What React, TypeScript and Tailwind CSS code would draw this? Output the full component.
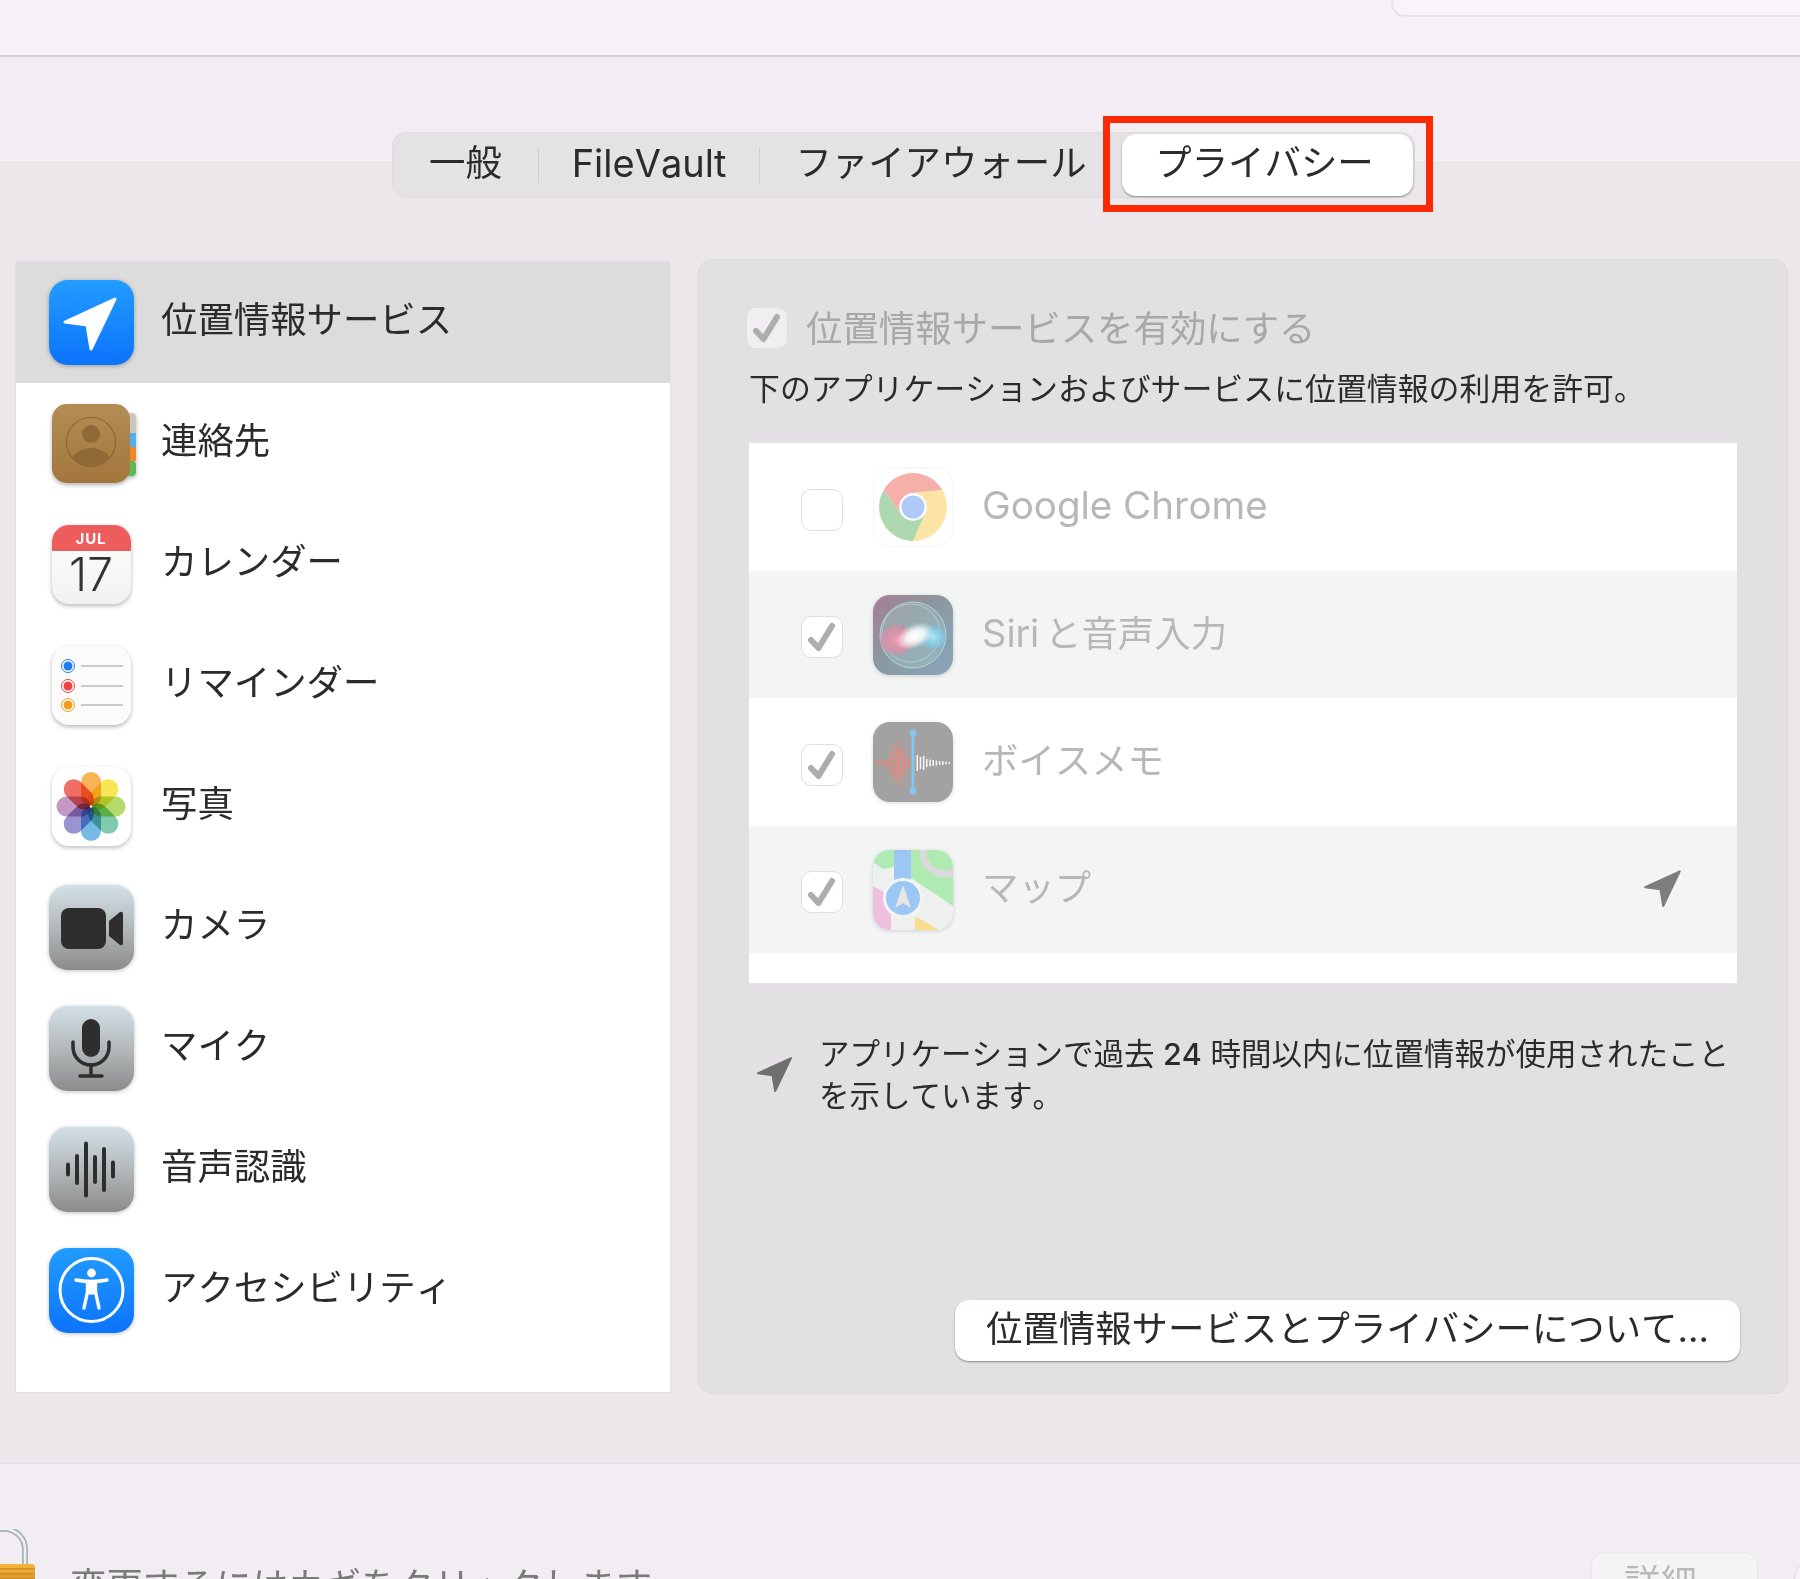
import React from 'react';

const ARROW = 'M66 19 L16 42 L38 45 L42 69 Z';

function LocationArrow({ className }: { className?: string }) {
  return (
    <svg viewBox="13 17 56 55" className={className}>
      <path d={ARROW} fill="currentColor" stroke="currentColor" strokeWidth="3" strokeLinejoin="round" />
    </svg>
  );
}

function GrayDefs({ id }: { id: string }) {
  return (
    <defs>
      <linearGradient id={id} x1="0" y1="0" x2="0" y2="1">
        <stop offset="0" stopColor="#d3e0e6" />
        <stop offset="0.5" stopColor="#b3b9bb" />
        <stop offset="1" stopColor="#8c8b8b" />
      </linearGradient>
    </defs>
  );
}

function BlueDefs({ id }: { id: string }) {
  return (
    <defs>
      <linearGradient id={id} x1="0" y1="0" x2="0" y2="1">
        <stop offset="0" stopColor="#229cff" />
        <stop offset="1" stopColor="#0c73fb" />
      </linearGradient>
    </defs>
  );
}

function LocationIcon() {
  return (
    <svg viewBox="0 0 85 85" className="h-[85px] w-[85px] drop-shadow-[0_1px_2px_rgba(0,0,0,0.3)]">
      <BlueDefs id="loc" />
      <rect width="85" height="85" rx="19" fill="url(#loc)" />
      <path d={ARROW} fill="#fff" stroke="#fff" strokeWidth="3" strokeLinejoin="round" />
    </svg>
  );
}

function ContactsIcon() {
  return (
    <svg viewBox="0 0 85 85" className="h-[85px] w-[85px] overflow-visible drop-shadow-[0_2px_2px_rgba(0,0,0,0.3)]">
      <defs>
        <linearGradient id="brown" x1="0" y1="0" x2="0" y2="1">
          <stop offset="0" stopColor="#b38d55" />
          <stop offset="1" stopColor="#a3763c" />
        </linearGradient>
        <clipPath id="headClip">
          <circle cx="42" cy="41" r="24" />
        </clipPath>
      </defs>
      <rect x="70" y="12" width="17" height="22" rx="4" fill="#c9c6bb" />
      <rect x="74" y="32" width="13" height="14" fill="#4fb2ee" />
      <rect x="74" y="46" width="13" height="14" fill="#ef8a22" />
      <rect x="70" y="60" width="17" height="15" rx="4" fill="#5cb85a" />
      <rect x="3" y="3" width="78" height="79" rx="15" fill="url(#brown)" />
      <circle cx="42" cy="41" r="24.5" fill="none" stroke="#8c6632" strokeWidth="1.2" />
      <g clipPath="url(#headClip)" fill="#8f6a36">
        <circle cx="42" cy="33" r="9" />
        <ellipse cx="42" cy="62" rx="20" ry="15" />
      </g>
    </svg>
  );
}

function CalendarIcon() {
  return (
    <svg viewBox="0 0 85 85" className="h-[85px] w-[85px] drop-shadow-[0_2px_2px_rgba(0,0,0,0.28)]">
      <defs>
        <linearGradient id="calBody" x1="0" y1="0" x2="0" y2="1">
          <stop offset="0" stopColor="#ffffff" />
          <stop offset="1" stopColor="#f1f1ef" />
        </linearGradient>
        <clipPath id="calClip">
          <rect x="3" y="3" width="79" height="79" rx="17" />
        </clipPath>
      </defs>
      <rect x="3" y="3" width="79" height="79" rx="17" fill="url(#calBody)" />
      <rect x="3" y="3" width="79" height="26" fill="#ee5d5e" clipPath="url(#calClip)" />
      <text x="42" y="22" textAnchor="middle" fontSize="15" fontWeight="700" fill="#fff" letterSpacing="1">JUL</text>
      <text x="42" y="69" textAnchor="middle" fontSize="46" fontWeight="300" fill="#333">17</text>
    </svg>
  );
}

function RemindersIcon() {
  const dots = [
    { y: 23, c: '#1e7cf2' },
    { y: 43, c: '#ee4444' },
    { y: 62, c: '#f39a1c' },
  ];
  return (
    <svg viewBox="0 0 85 85" className="h-[85px] w-[85px] drop-shadow-[0_2px_2px_rgba(0,0,0,0.28)]">
      <rect x="3" y="3" width="79" height="79" rx="17" fill="#fbfbfa" />
      {dots.map((d) => (
        <g key={d.y}>
          <circle cx="19" cy={d.y} r="6.5" fill="#fff" stroke={d.c} strokeWidth="1" />
          <circle cx="19" cy={d.y} r="4.5" fill={d.c} />
          <rect x="32" y={d.y - 1} width="42" height="2" fill="#cbcbcb" />
        </g>
      ))}
    </svg>
  );
}

function PhotosIcon() {
  const petals = ['#f7a02a', '#f6e02a', '#a4d044', '#62bd98', '#55a8de', '#7f78c4', '#b47fb6', '#ec4a40'];
  return (
    <svg viewBox="0 0 85 85" className="h-[85px] w-[85px] drop-shadow-[0_2px_2px_rgba(0,0,0,0.25)]">
      <rect x="3" y="3" width="79" height="79" rx="17" fill="#fff" />
      {petals.map((c, i) => (
        <rect
          key={c}
          x="32"
          y="8"
          width="20"
          height="34.5"
          rx="10"
          fill={c}
          fillOpacity="0.8"
          transform={`rotate(${i * 45} 42 42.5)`}
          style={{ mixBlendMode: 'multiply' }}
        />
      ))}
      <circle cx="42" cy="42.5" r="1.2" fill="#fff" />
    </svg>
  );
}

function CameraIcon() {
  return (
    <svg viewBox="0 0 85 85" className="h-[85px] w-[85px] drop-shadow-[0_1px_2px_rgba(0,0,0,0.25)]">
      <GrayDefs id="cam" />
      <rect width="85" height="85" rx="19" fill="url(#cam)" />
      <rect x="12" y="23" width="45" height="41" rx="8" fill="#2e2e2e" />
      <path d="M60 36 L71 27 Q74 26 74 29 L74 58 Q74 61 71 60 L60 51 Z" fill="#2e2e2e" />
    </svg>
  );
}

function MicIcon() {
  return (
    <svg viewBox="0 0 85 85" className="h-[85px] w-[85px] drop-shadow-[0_1px_2px_rgba(0,0,0,0.25)]">
      <GrayDefs id="mic" />
      <rect width="85" height="85" rx="19" fill="url(#mic)" />
      <rect x="33" y="13" width="18" height="38" rx="9" fill="#2e2e2e" />
      <path d="M24 36 V41 A18 18 0 0 0 60 41 V36" fill="none" stroke="#2e2e2e" strokeWidth="3.5" strokeLinecap="round" />
      <path d="M42 59 V69 M31 70 H53" fill="none" stroke="#2e2e2e" strokeWidth="3.5" strokeLinecap="round" />
    </svg>
  );
}

function SpeechIcon() {
  const bars = [
    { x: 19, h: 10 },
    { x: 28, h: 27 },
    { x: 37, h: 52 },
    { x: 46, h: 25 },
    { x: 55, h: 41 },
    { x: 64, h: 14 },
  ];
  return (
    <svg viewBox="0 0 85 85" className="h-[85px] w-[85px] drop-shadow-[0_1px_2px_rgba(0,0,0,0.25)]">
      <GrayDefs id="speech" />
      <rect width="85" height="85" rx="19" fill="url(#speech)" />
      {bars.map((b) => (
        <line key={b.x} x1={b.x} x2={b.x} y1={42.5 - b.h / 2} y2={42.5 + b.h / 2} stroke="#2e2e2e" strokeWidth="4" strokeLinecap="round" />
      ))}
    </svg>
  );
}

function AccessibilityIcon() {
  return (
    <svg viewBox="0 0 85 85" className="h-[85px] w-[85px] drop-shadow-[0_1px_2px_rgba(0,0,0,0.25)]">
      <BlueDefs id="acc" />
      <rect width="85" height="85" rx="19" fill="url(#acc)" />
      <circle cx="42.5" cy="42" r="31.5" fill="none" stroke="#fff" strokeWidth="3" />
      <circle cx="42.5" cy="25" r="4.4" fill="#fff" />
      <path d="M27 32 Q42.5 35 58 32" fill="none" stroke="#fff" strokeWidth="3.4" strokeLinecap="round" />
      <path d="M38.5 34 V44 L35 60 M46.5 34 V44 L50 60 M39 44 Q42.5 46 46 44" fill="none" stroke="#fff" strokeWidth="3.4" strokeLinecap="round" strokeLinejoin="round" />
      <rect x="38.5" y="33" width="8" height="12" fill="#fff" />
    </svg>
  );
}

function ChromeIcon() {
  return (
    <svg viewBox="0 0 80 80" className="h-[80px] w-[80px]">
      <rect x="0.5" y="0.5" width="79" height="79" rx="17" fill="#fff" stroke="#f5f5f5" />
      <g opacity="0.42">
        <path d="M69.4 23 A34 34 0 0 0 10.6 23 L28 47 A14 14 0 0 1 40 26 Z" fill="#ea4335" />
        <path d="M69.4 23 A34 34 0 0 1 40 74 L52 47 A14 14 0 0 0 40 26 Z" fill="#fbc02d" />
        <path d="M40 74 A34 34 0 0 1 10.6 23 L28 47 A14 14 0 0 0 52 47 Z" fill="#3da345" />
        <circle cx="40" cy="40" r="11.5" fill="#3f7fe8" />
      </g>
    </svg>
  );
}

function SiriIcon() {
  return (
    <svg viewBox="0 0 80 80" className="h-[80px] w-[80px] drop-shadow-[0_1px_2px_rgba(0,0,0,0.15)]">
      <defs>
        <linearGradient id="siriBg" x1="0" y1="0" x2="1" y2="1">
          <stop offset="0" stopColor="#a77d95" />
          <stop offset="0.5" stopColor="#8a9aa2" />
          <stop offset="1" stopColor="#8aa4bd" />
        </linearGradient>
        <radialGradient id="siriPink">
          <stop offset="0" stopColor="#f79ab6" />
          <stop offset="1" stopColor="#e87fa0" stopOpacity="0.45" />
        </radialGradient>
        <radialGradient id="siriBlue">
          <stop offset="0" stopColor="#a6e8f8" />
          <stop offset="1" stopColor="#72c4e8" stopOpacity="0.5" />
        </radialGradient>
        <radialGradient id="siriWhite">
          <stop offset="0" stopColor="#ffffff" />
          <stop offset="0.45" stopColor="#ffffff" stopOpacity="0.85" />
          <stop offset="1" stopColor="#ffffff" stopOpacity="0" />
        </radialGradient>
      </defs>
      <rect width="80" height="80" rx="17" fill="url(#siriBg)" />
      <circle cx="40" cy="40" r="33" fill="#a8d2cc" fillOpacity="0.35" stroke="#b5e6df" strokeOpacity="0.8" />
      <circle cx="38" cy="38" r="29" fill="none" stroke="#c9ece6" strokeOpacity="0.5" />
      <ellipse cx="24" cy="45" rx="17" ry="15" fill="url(#siriPink)" />
      <ellipse cx="60" cy="42" rx="13" ry="12" fill="url(#siriBlue)" />
      <ellipse cx="42" cy="41" rx="20" ry="12" fill="url(#siriWhite)" transform="rotate(-25 42 41)" />
    </svg>
  );
}

function VoiceMemoIcon() {
  const bars = [2, 4, 5, 9, 6, 22, 38, 28, 46, 30, 14, 10];
  const whites = [16, 12, 14, 8, 7, 6, 5, 4, 4, 3, 2];
  return (
    <svg viewBox="0 0 80 80" className="h-[80px] w-[80px] drop-shadow-[0_1px_2px_rgba(0,0,0,0.15)]">
      <rect width="80" height="80" rx="17" fill="#a2a2a2" />
      {bars.map((h, i) => (
        <rect key={i} x={2 + i * 3} y={41 - h / 2} width="1.5" height={h} fill="#ef8577" />
      ))}
      {whites.map((h, i) => (
        <rect key={i} x={43.5 + i * 3.2} y={41 - h / 2} width="1.5" height={h} fill="#f6f6f6" />
      ))}
      <rect x="38.6" y="11" width="2.8" height="58" fill="#86c4f2" />
      <circle cx="40" cy="11" r="3.6" fill="#86c4f2" />
      <circle cx="40" cy="69" r="3.6" fill="#86c4f2" />
    </svg>
  );
}

function MapsIcon() {
  return (
    <svg viewBox="0 0 80 80" className="h-[80px] w-[80px] drop-shadow-[0_1px_2px_rgba(0,0,0,0.15)]">
      <defs>
        <clipPath id="mapClip">
          <rect width="80" height="80" rx="17" />
        </clipPath>
      </defs>
      <g clipPath="url(#mapClip)">
        <rect width="80" height="80" fill="#eef0f0" />
        <path d="M0 0 H21 V17 L10 19 L0 12 Z" fill="#aeeab2" />
        <path d="M38 0 H80 V56 L50 36 L38 28 Z" fill="#aeeab2" />
        <circle cx="72" cy="2" r="22" fill="none" stroke="#dadada" strokeWidth="7" />
        <rect x="21" y="0" width="17" height="32" fill="#9cc7f5" />
        <path d="M0 36 L18 46 V80 H0 Z" fill="#efbfe0" />
        <path d="M42 66 L66 80 H42 Z" fill="#f8dc90" />
        <circle cx="30" cy="48" r="20" fill="#f3f5f4" />
        <circle cx="30" cy="48" r="17" fill="#9cc7f5" />
        <path d="M30 35 L38 58 L30 53 L22 58 Z" fill="#e6e6e6" strokeLinejoin="round" />
      </g>
    </svg>
  );
}

function Check() {
  return (
    <svg viewBox="0 0 42 42" className="h-[42px] w-[42px]">
      <path d="M10 24 L17.5 32 L31 10" fill="none" stroke="#adadad" strokeWidth="6" strokeLinecap="round" strokeLinejoin="round" />
    </svg>
  );
}

function Checkbox({ checked, tint = 'bg-white' }: { checked: boolean; tint?: string }) {
  return (
    <div className={`h-[42px] w-[42px] shrink-0 rounded-[10px] border border-[#dedede] ${tint}`}>
      {checked && <div className="-m-px"><Check /></div>}
    </div>
  );
}

const services = [
  { label: '位置情報サービス', icon: <LocationIcon /> },
  { label: '連絡先', icon: <ContactsIcon /> },
  { label: 'カレンダー', icon: <CalendarIcon /> },
  { label: 'リマインダー', icon: <RemindersIcon /> },
  { label: '写真', icon: <PhotosIcon /> },
  { label: 'カメラ', icon: <CameraIcon /> },
  { label: 'マイク', icon: <MicIcon /> },
  { label: '音声認識', icon: <SpeechIcon /> },
  { label: 'アクセシビリティ', icon: <AccessibilityIcon /> },
];

const apps = [
  { key: 'chrome', label: <span className="text-[38.5px]">Google Chrome</span>, icon: <ChromeIcon />, checked: false, h: 'h-[128px] bg-white', arrow: false },
  { key: 'siri', label: <><span className="mr-[6px] text-[38px]">Siri</span>と音声入力</>, icon: <SiriIcon />, checked: true, h: 'h-[127px] bg-[#f3f5f4]', arrow: false },
  { key: 'memo', label: 'ボイスメモ', icon: <VoiceMemoIcon />, checked: true, h: 'h-[128px] bg-white', arrow: false },
  { key: 'maps', label: 'マップ', icon: <MapsIcon />, checked: true, h: 'h-[127px] bg-[#f3f5f4]', arrow: true },
];

export default function App() {
  return (
    <div className="flex h-[1579px] w-[1800px] flex-col overflow-hidden bg-[#f1edf2] font-['Inter','Noto_Sans_CJK_JP',sans-serif] text-[36.4px] text-[#2b2b2b] blur-[0.5px] [font-kerning:none]">
      {/* Toolbar with the cut-off search field */}
      <header className="flex h-[57px] shrink-0 justify-end border-b-2 border-[#d2ced4] bg-[#f6f0f7]">
        <div className="h-[17px] w-[409px] rounded-bl-[14px] border-b-2 border-l-2 border-[#e6e2e7] bg-[#f8f4f9]" />
      </header>

      <div className="h-[105px] shrink-0" />

      <main className="flex h-[1302px] shrink-0 flex-col border-y border-[#e2dee3] bg-[#ebe7eb]">
        {/* Tabs straddle the top edge of the pane */}
        <div className="-mt-[31px] flex pl-[392px]">
          <div className="flex h-[66px] w-[1023px] items-center rounded-[14px] border border-[#dfdce0] bg-[#e5e2e6]">
            <div className="flex w-[145px] justify-center pb-[3px]">一般</div>
            <div className="h-[35px] w-px bg-[#cfccd0]" />
            <div className="flex w-[220px] justify-center pb-[3px] text-[38px]">FileVault</div>
            <div className="h-[35px] w-px bg-[#cfccd0]" />
            <div className="flex w-[362px] justify-center pb-[3px]">ファイアウォール</div>
            <div className="relative flex h-[62px] w-[291px] items-center justify-center rounded-[14px] bg-white pr-[6px] pb-[3px] shadow-[0_1px_2px_rgba(0,0,0,0.4)]">
              プライバシー
              <div className="absolute -top-[18px] -right-[20px] -bottom-[16px] -left-[19px] border-[7px] border-[#fb2a05]" />
            </div>
          </div>
        </div>

        <div className="mt-[61px] flex items-start pl-[15px]">
          {/* Service list */}
          <div className="mt-[2px] h-[1132px] w-[656px] border border-[#e4e1e4] bg-white">
            {services.map((s, i) => (
              <div key={s.label} className={`flex h-[121px] items-center pl-[33px] ${i === 0 ? 'bg-[#dcdcdc]' : ''}`}>
                <div className="mr-[27px] mb-[1px]">{s.icon}</div>
                <span className="-mt-[5px]">{s.label}</span>
              </div>
            ))}
          </div>

          {/* Detail pane */}
          <div className="ml-[27px] flex h-[1135px] w-[1090px] flex-col rounded-[14px] border border-[#dedbde] bg-[#e3e0e4] pt-[47px] pl-[50px]">
            <div className="flex h-[42px] items-center gap-[18px] leading-none">
              <div className="-ml-[3px]"><Checkbox checked tint="bg-[#f0eef1]" /></div>
              <span className="mt-[3px] text-[#a9a7a9]">位置情報サービスを有効にする</span>
            </div>
            <p className="mt-[20px] h-[40px] text-[30.9px] leading-[40px] whitespace-nowrap">
              下のアプリケーションおよびサービスに位置情報の利用を許可。
            </p>

            <div className="mt-[33px] w-[988px] border-y border-[#e6e4e7] bg-white pb-[30px]">
              {apps.map((a) => (
                <div key={a.key} className={`flex items-center pl-[52px] ${a.h}`}>
                  <div className="mt-[5px]"><Checkbox checked={a.checked} /></div>
                  <div className="ml-[30px] mr-[29px]">{a.icon}</div>
                  <span className="-mt-[2px] text-[#b7b7b7]">{a.label}</span>
                  {a.arrow && <LocationArrow className="ml-auto mr-[55px] -mt-[2px] h-[38px] w-[39px] text-[#7d7d7d]" />}
                </div>
              ))}
            </div>

            <div className="mt-[49px] flex items-center">
              <LocationArrow className="ml-[7px] mr-[26px] h-[40px] w-[37px] text-[#6f6f6f]" />
              <p className="text-[30.5px] leading-[42px] whitespace-nowrap">
                アプリケーションで過去 <span className="font-medium">24</span> 時間以内に位置情報が使用されたこと
                <br />
                を示しています。
              </p>
            </div>

            <div className="mt-auto mr-[47px] mb-[32px] flex justify-end">
              <div className="flex h-[61px] w-[785px] items-center justify-center rounded-[14px] bg-white pb-[2px] leading-none shadow-[0_1px_2px_rgba(0,0,0,0.4)]">
                位置情報サービスとプライバシーについて...
              </div>
            </div>
          </div>
        </div>
      </main>

      {/* Footer: lock, hint and the cut-off buttons */}
      <footer className="flex min-h-0 flex-1 items-start">
        <svg viewBox="0 0 70 90" className="-ml-[35px] mt-[65px] h-[90px] w-[70px] shrink-0">
          <defs>
            <linearGradient id="lockBody" x1="0" y1="0" x2="0" y2="1">
              <stop offset="0" stopColor="#f6b73c" />
              <stop offset="0.3" stopColor="#e09a28" />
              <stop offset="0.6" stopColor="#f7c860" />
              <stop offset="1" stopColor="#d98d20" />
            </linearGradient>
          </defs>
          <path d="M17 36 V20 A18 17 0 0 1 60 20 V36" fill="none" stroke="#a7b0b6" strokeWidth="6" />
          <path d="M17 36 V20 A18 17 0 0 1 60 20 V36" fill="none" stroke="#eef1f3" strokeWidth="2.5" />
          <rect x="0" y="35" width="70" height="50" rx="3" fill="url(#lockBody)" />
          {[39, 44, 49].map((y) => (
            <rect key={y} x="0" y={y} width="70" height="1.5" fill="#b9791c" fillOpacity="0.55" />
          ))}
        </svg>
        <span className="ml-[35px] mt-[98px] whitespace-nowrap leading-[48px] text-[#7a7a7a]">
          変更するにはカギをクリックします。
        </span>
        <div className="ml-auto mt-[88px] flex h-[61px] w-[167px] items-center justify-center rounded-[14px] border border-[#ebe7ec] bg-[#f6f3f7] pr-[28px] pt-[2px] text-[#bbb8bc]">
          詳細
        </div>
        <div className="-mr-[34px] ml-[36px] mt-[95px] h-[40px] w-[40px] shrink-0 rounded-full border border-[#dcd8dd] bg-[#f6f3f7]" />
      </footer>
    </div>
  );
}
